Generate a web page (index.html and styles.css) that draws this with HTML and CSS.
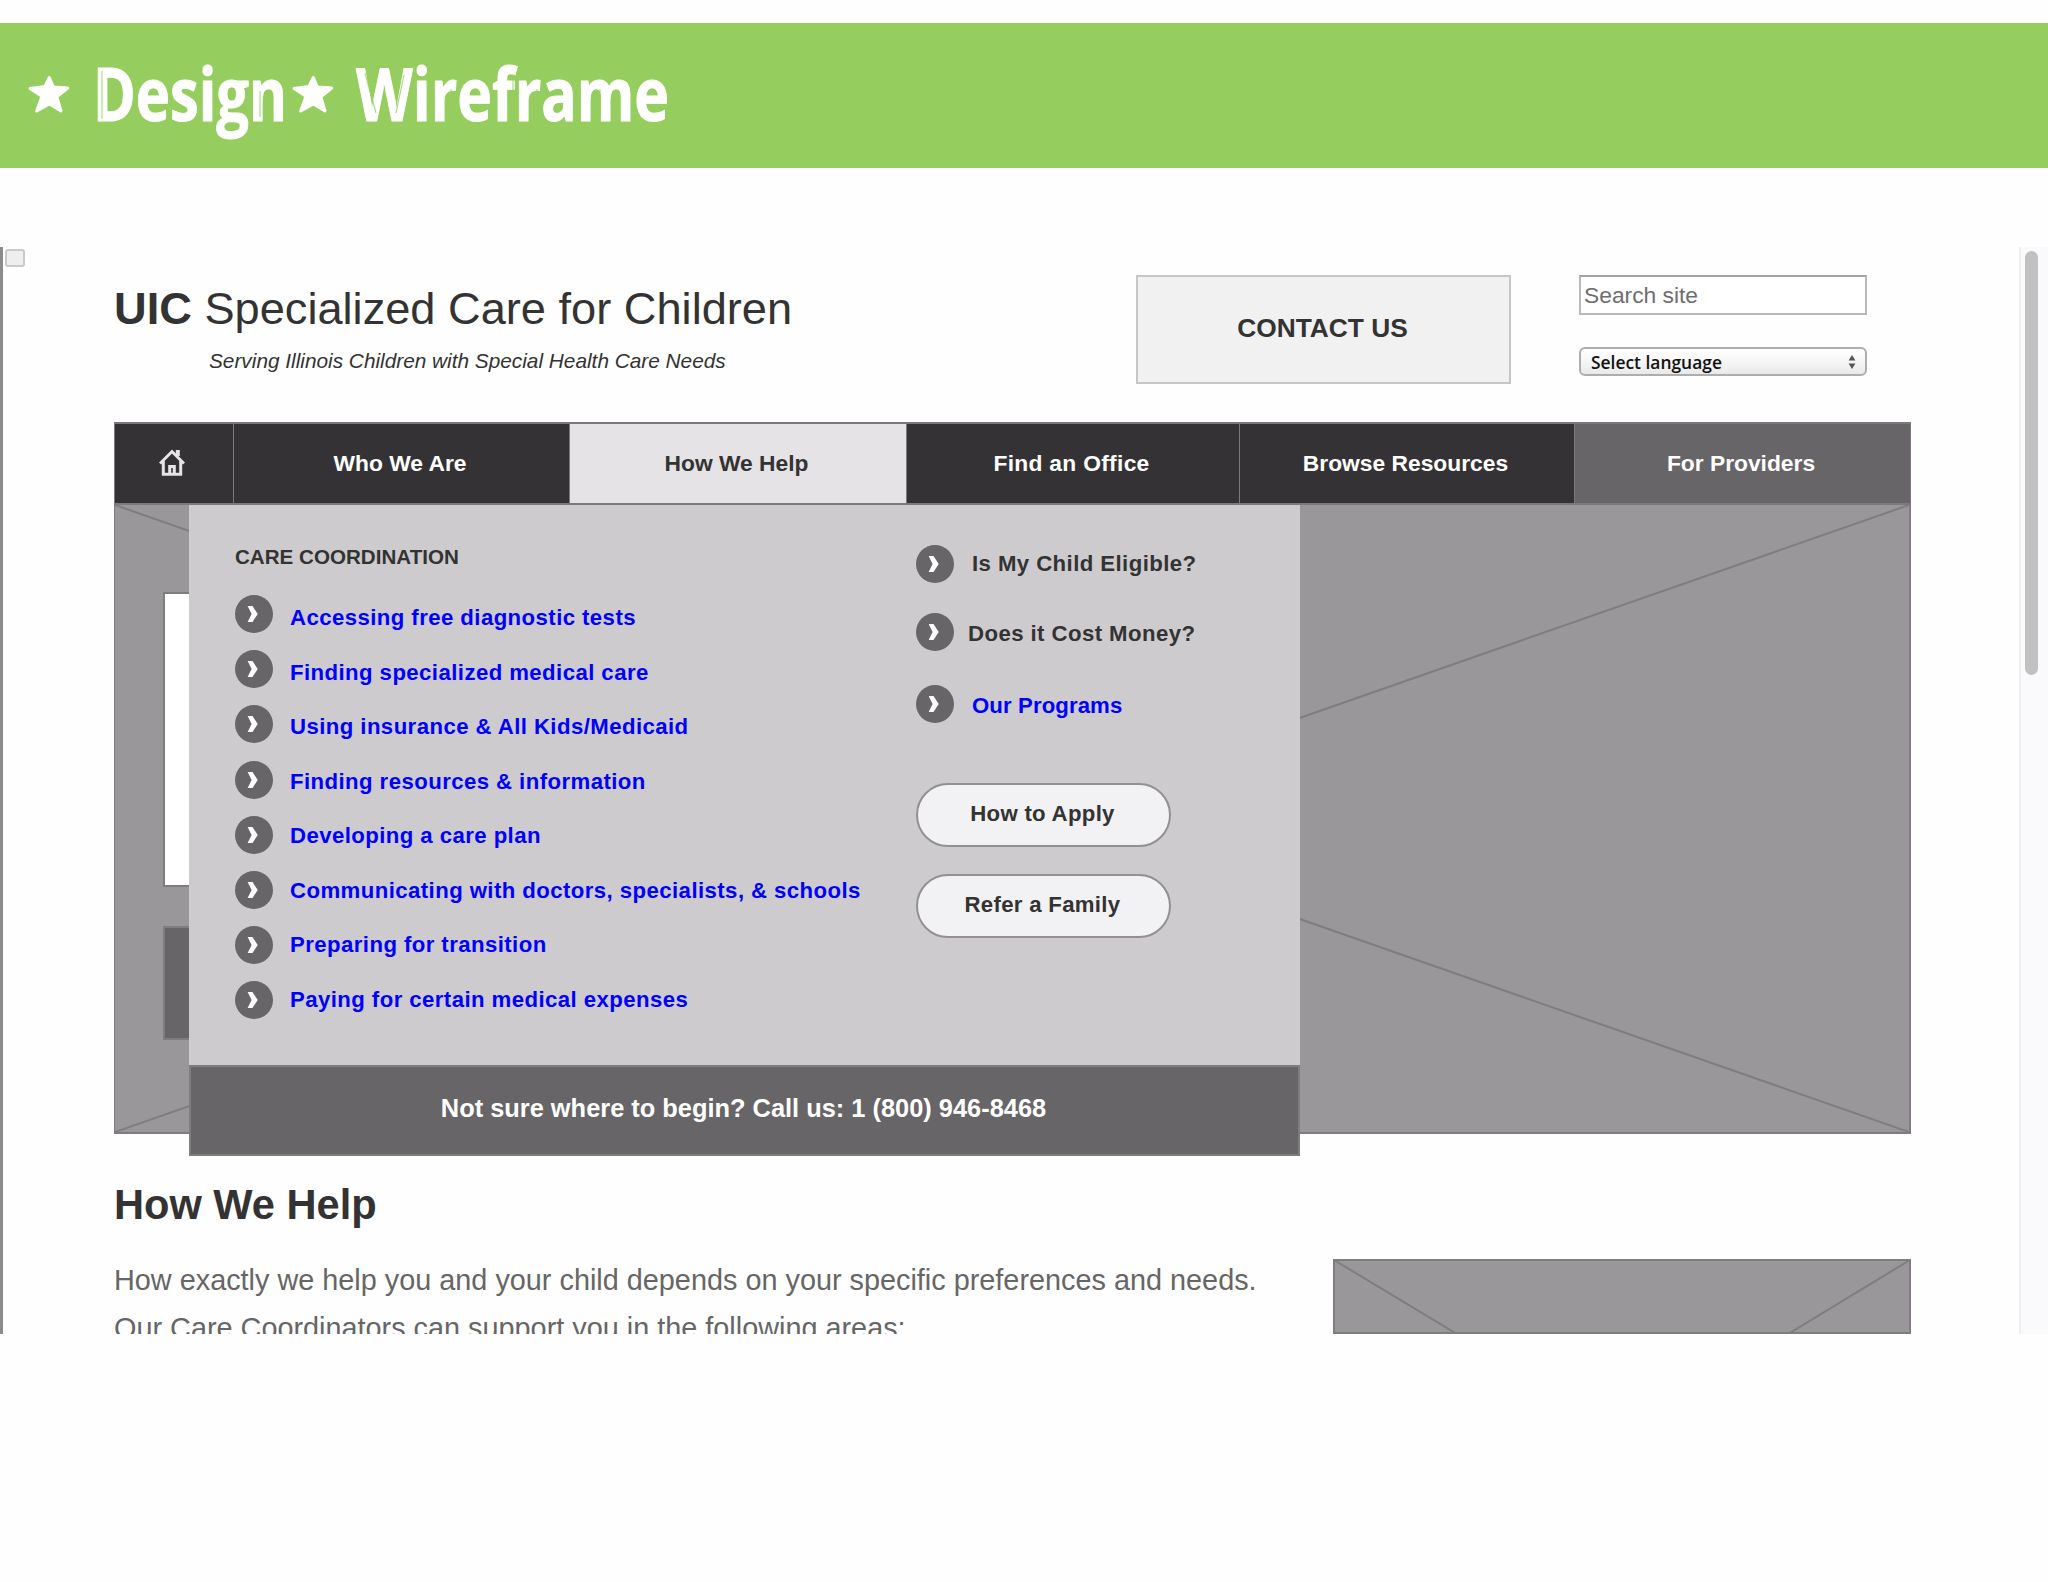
FILE: index.html
```html
<!DOCTYPE html>
<html lang="en">
<head>
    <meta charset="UTF-8">
    <meta name="viewport" content="width=device-width, initial-scale=1.0">
    <title>Design Wireframe</title>
    <link rel="stylesheet" href="styles.css">
</head>
<body>
    <!-- Shared icons -->
    <svg class="icon-defs" width="0" height="0">
        <symbol id="arrow" viewBox="0 0 38 38">
            <circle cx="19" cy="19" r="19" fill="#676567" />
            <path d="M12.6 11h4.9l5.2 8-5.2 8h-4.9l4-8z" fill="#fff" />
        </symbol>
    </svg>

    <h1 class="banner">
        <svg width="700" height="144" viewBox="0 0 700 144">
            <g class="banner-star">
                <path id="star" d="M49.3 54.5l4.2 9.5 14.3 1-11 8.7 4.2 14.3-11.7-7-12.6 7 5.2-14.8L30 65.5l14.7-1.9z" />
                <use href="#star" x="264" />
            </g>
            <text class="banner-text" x="93" y="98" textLength="194" lengthAdjust="spacingAndGlyphs">Design</text>
            <text class="banner-text" x="356" y="98" textLength="313" lengthAdjust="spacingAndGlyphs">Wireframe</text>
            <!-- Marker scratches in the lettering -->
            <path class="banner-scratch" d="M102 48v48M260 68v26M365 50l11 40M404 52l-8 38M430 66v28M451 66v28M513 54v16M537 66v28M600 66v28" />
        </svg>
    </h1>

    <div class="browser">
        <span class="browser-tab"></span>
        <div class="page">
            <header class="site-header">
                <div class="brand">
                    <div class="brand-name"><b>UIC</b> Specialized Care for Children</div>
                    <div class="tagline">Serving Illinois Children with Special Health Care Needs</div>
                </div>
                <a class="contact">CONTACT US</a>
                <div class="tools">
                    <input class="search" type="text" placeholder="Search site">
                    <div class="language">
                        <span>Select language</span>
                        <svg width="8" height="14" viewBox="0 0 8 14"><path d="M4 0l3.4 5.4H.6zM4 14l3.4-5.4H.6z" fill="#555" /></svg>
                    </div>
                </div>
            </header>

            <nav class="menu">
                <a class="menu-item home">
                    <svg width="26" height="27" viewBox="0 0 26 27" fill="none" stroke="#e6e4e6" stroke-width="3">
                        <path d="M1 14.5L13 2.5l12 12" />
                        <path d="M4.3 12v13.3h17.4V12" />
                        <path d="M10.7 25v-7.5h4.6V25" />
                        <path d="M18.8 1v6" stroke-width="4" />
                    </svg>
                </a>
                <a class="menu-item">Who We Are</a>
                <a class="menu-item active">How We Help</a>
                <a class="menu-item office">Find an Office</a>
                <a class="menu-item">Browse Resources</a>
                <a class="menu-item providers">For Providers</a>
            </nav>

            <div class="hero">
                <svg class="hero-cross" viewBox="0 0 1797 629" preserveAspectRatio="none">
                    <path d="M0 0l1797 629M0 629L1797 0" stroke="#7f7d7f" stroke-width="2" />
                </svg>
                <div class="hero-card"></div>
                <div class="hero-button"></div>

                <div class="dropdown">
                    <div class="dropdown-body">
                        <div class="coordination">
                            <h3>CARE COORDINATION</h3>
                            <div class="columns">
                                <div class="arrows">
                                    <svg><use href="#arrow" /></svg>
                                    <svg><use href="#arrow" /></svg>
                                    <svg><use href="#arrow" /></svg>
                                    <svg><use href="#arrow" /></svg>
                                    <svg><use href="#arrow" /></svg>
                                    <svg><use href="#arrow" /></svg>
                                    <svg><use href="#arrow" /></svg>
                                    <svg><use href="#arrow" /></svg>
                                </div>
                                <ul class="links">
                                    <li>Accessing free diagnostic tests</li>
                                    <li>Finding specialized medical care</li>
                                    <li>Using insurance &amp; All Kids/Medicaid</li>
                                    <li>Finding resources &amp; information</li>
                                    <li>Developing a care plan</li>
                                    <li>Communicating with doctors, specialists, &amp; schools</li>
                                    <li>Preparing for transition</li>
                                    <li>Paying for certain medical expenses</li>
                                </ul>
                            </div>
                        </div>
                        <div class="questions">
                            <div class="question"><svg><use href="#arrow" /></svg><span>Is My Child Eligible?</span></div>
                            <div class="question cost"><svg><use href="#arrow" /></svg><span>Does it Cost Money?</span></div>
                            <div class="question programs"><svg><use href="#arrow" /></svg><span>Our Programs</span></div>
                            <a class="pill">How to Apply</a>
                            <a class="pill">Refer a Family</a>
                        </div>
                    </div>
                    <div class="dropdown-footer">Not sure where to begin? Call us: 1 (800) 946-8468</div>
                </div>
            </div>

            <section class="content">
                <div class="content-text">
                    <h2>How We Help</h2>
                    <p>How exactly we help you and your child depends on your specific preferences and needs.<br>Our Care Coordinators can support you in the following areas:</p>
                </div>
                <svg class="content-image" width="578" height="75" viewBox="0 0 578 75">
                    <rect x="1" y="1" width="576" height="73" />
                    <path d="M1 1l123 74M577 1L455 75" />
                </svg>
            </section>
        </div>
        <div class="scrollbar"><div class="thumb"></div></div>
    </div>
</body>
</html>
```
FILE: styles.css
```css
/* General Styling */
* {
    box-sizing: border-box;
}

body {
    margin: 0;
    padding-top: 23px;
    background: #fefefe;
    color: #333;
    font-family: "Liberation Sans", Arial, sans-serif;
}

h1, h2, h3, p, ul {
    margin: 0;
    padding: 0;
}

.icon-defs {
    position: absolute;
}

/* Banner */
.banner {
    height: 145px;
    background: #96cd5f;
}

.banner svg {
    display: block;
    overflow: visible;
}

.banner-text {
    fill: #fff;
    stroke: #fff;
    stroke-width: 1;
    stroke-linejoin: round;
    font-family: "Open Sans", "Noto Sans", sans-serif;
    font-size: 73px;
    font-weight: 700;
}

.banner-star {
    fill: #fff;
    stroke: #fff;
    stroke-width: 3;
    stroke-linejoin: round;
}

.banner-scratch {
    fill: none;
    stroke: #96cd5f;
    stroke-width: 1.2;
    opacity: 0.75;
}

/* Browser Window */
.browser {
    position: relative;
    display: flex;
    height: 1087px;
    margin-top: 79px;
    border-left: 3px solid #8b8b8b;
    overflow: hidden;
}

.browser-tab {
    position: absolute;
    top: 2px;
    left: 2px;
    width: 20px;
    height: 18px;
    border: 2px solid #c9c9c9;
    border-radius: 3px;
    background: #eee;
}

.page {
    width: 1908px;
    padding-left: 111px;
    flex: none;
}

.scrollbar {
    width: 29px;
    margin-left: auto;
    padding: 4px 0 0 4px;
    border-left: 2px solid #f0eff0;
    background: #faf9fb;
}

.thumb {
    width: 13px;
    height: 424px;
    border-radius: 7px;
    background: #c1c1c1;
}

/* Header */
.site-header {
    display: flex;
    height: 175px;
}

.brand {
    width: 1022px;
    padding-top: 36px;
}

.brand-name {
    font-size: 45.2px;
    line-height: 52px;
}

.tagline {
    margin-top: 13px;
    padding-left: 95px;
    font-size: 20.8px;
    font-style: italic;
    line-height: 26px;
}

.contact {
    display: flex;
    justify-content: center;
    align-items: center;
    width: 375px;
    height: 109px;
    margin-top: 28px;
    padding: 0 2px 2px 0;
    border: 2px solid #c6c5c7;
    background: #f2f1f2;
    font-size: 26.3px;
    font-weight: bold;
}

.tools {
    width: 288px;
    margin: 28px 0 0 68px;
}

.search {
    display: block;
    width: 288px;
    height: 40px;
    padding: 0 3px;
    border: 2px solid #b9b9b9;
    border-top-color: #a3a3a3;
    background: #fff;
    font-family: inherit;
    font-size: 22.8px;
}

.search::placeholder {
    color: #6e6e6e;
}

.language {
    display: flex;
    justify-content: space-between;
    align-items: center;
    height: 29px;
    margin-top: 32px;
    padding: 0 9px 0 10px;
    border: 2px solid #adadad;
    border-radius: 6px;
    background: linear-gradient(#fff, #f6f6f6 50%, #e9e9e9);
    color: #111;
    font-family: "Open Sans", sans-serif;
    font-size: 17.4px;
    font-weight: 600;
    line-height: 20px;
}

/* Menu */
.menu {
    display: grid;
    grid-template-columns: 119px 336px 337px 333px 335px 335px;
    width: 1797px;
    height: 83px;
    border: solid #7b797b;
    border-width: 2px 1px;
}

.menu-item {
    display: flex;
    justify-content: center;
    align-items: center;
    padding-right: 3px;
    border-right: 1px solid #7b797b;
    background: #343234;
    color: #fff;
    font-size: 22.8px;
    font-weight: bold;
}

.menu-item.home {
    padding: 0 5px 2px 0;
}

.menu-item.active {
    background: #e5e3e5;
    color: #333;
}

.menu-item.office {
    letter-spacing: 0.3px;
}

.menu-item.providers {
    border-right: none;
    background: #676567;
}

/* Hero */
.hero {
    position: relative;
    width: 1797px;
    height: 629px;
    padding: 87px 0 0 48px;
    border: solid #7f7d7f;
    border-width: 0 2px 2px 1px;
    background: #999799;
}

.hero-cross {
    position: absolute;
    top: 0;
    left: 0;
    width: 100%;
    height: 100%;
}

.hero-card {
    position: relative;
    width: 400px;
    height: 295px;
    border: 2px solid #7f7d7f;
    background: #fff;
}

.hero-button {
    width: 400px;
    height: 114px;
    margin-top: 39px;
    border: 2px solid #7f7d7f;
    background: #676567;
}

/* Dropdown Menu */
.dropdown {
    position: absolute;
    top: 0;
    left: 74px;
    width: 1111px;
    font-size: 22.2px;
    font-weight: bold;
    letter-spacing: 0.42px;
}

.dropdown-body {
    display: flex;
    height: 560px;
    padding-left: 46px;
    background: #cdcbcd;
}

.coordination {
    width: 681px;
    padding-top: 39px;
}

.coordination h3 {
    font-size: 20.6px;
    line-height: 26px;
    letter-spacing: 0;
}

.columns {
    display: flex;
    gap: 17px;
}

.arrows {
    display: flex;
    flex-direction: column;
    gap: 17.2px;
    padding-top: 25px;
}

.arrows svg,
.question svg {
    display: block;
    flex: none;
    width: 38px;
    height: 38px;
}

.links {
    padding-top: 21.4px;
    color: #0000fe;
    line-height: 54.5px;
    list-style: none;
}

.questions {
    padding-top: 40px;
}

.question {
    display: flex;
    align-items: center;
    gap: 18px;
    height: 38px;
    margin-bottom: 30px;
}

.question.cost {
    gap: 14px;
    margin-bottom: 34px;
}

.question.cost span {
    padding-top: 3px;
}

.question.programs {
    margin-bottom: 60px;
    color: #0000fe;
    letter-spacing: 0.1px;
}

.question.programs span {
    padding-top: 4px;
}

.pill {
    display: flex;
    justify-content: center;
    align-items: center;
    width: 255px;
    height: 64px;
    margin-bottom: 27px;
    padding: 0 2px 3px 0;
    border: 2px solid #929092;
    border-radius: 32px;
    background: #f2f1f3;
    letter-spacing: 0.3px;
}

.dropdown-footer {
    height: 91px;
    padding-right: 2px;
    border: 2px solid #7f7d7f;
    background: #676567;
    color: #fff;
    font-size: 25.4px;
    letter-spacing: 0;
    line-height: 82px;
    text-align: center;
}

/* Content */
.content {
    display: flex;
    width: 1797px;
}

.content-text {
    width: 1219px;
    padding-top: 46px;
}

.content-text h2 {
    font-size: 41.6px;
    line-height: 50px;
}

.content-text p {
    margin-top: 26px;
    color: #666;
    font-size: 28.83px;
    line-height: 48px;
}

.content-image {
    flex: none;
    margin-top: 125px;
}

.content-image rect {
    fill: #999799;
    stroke: #7f7d7f;
    stroke-width: 2;
}

.content-image path {
    fill: none;
    stroke: #7f7d7f;
    stroke-width: 2;
}
```
